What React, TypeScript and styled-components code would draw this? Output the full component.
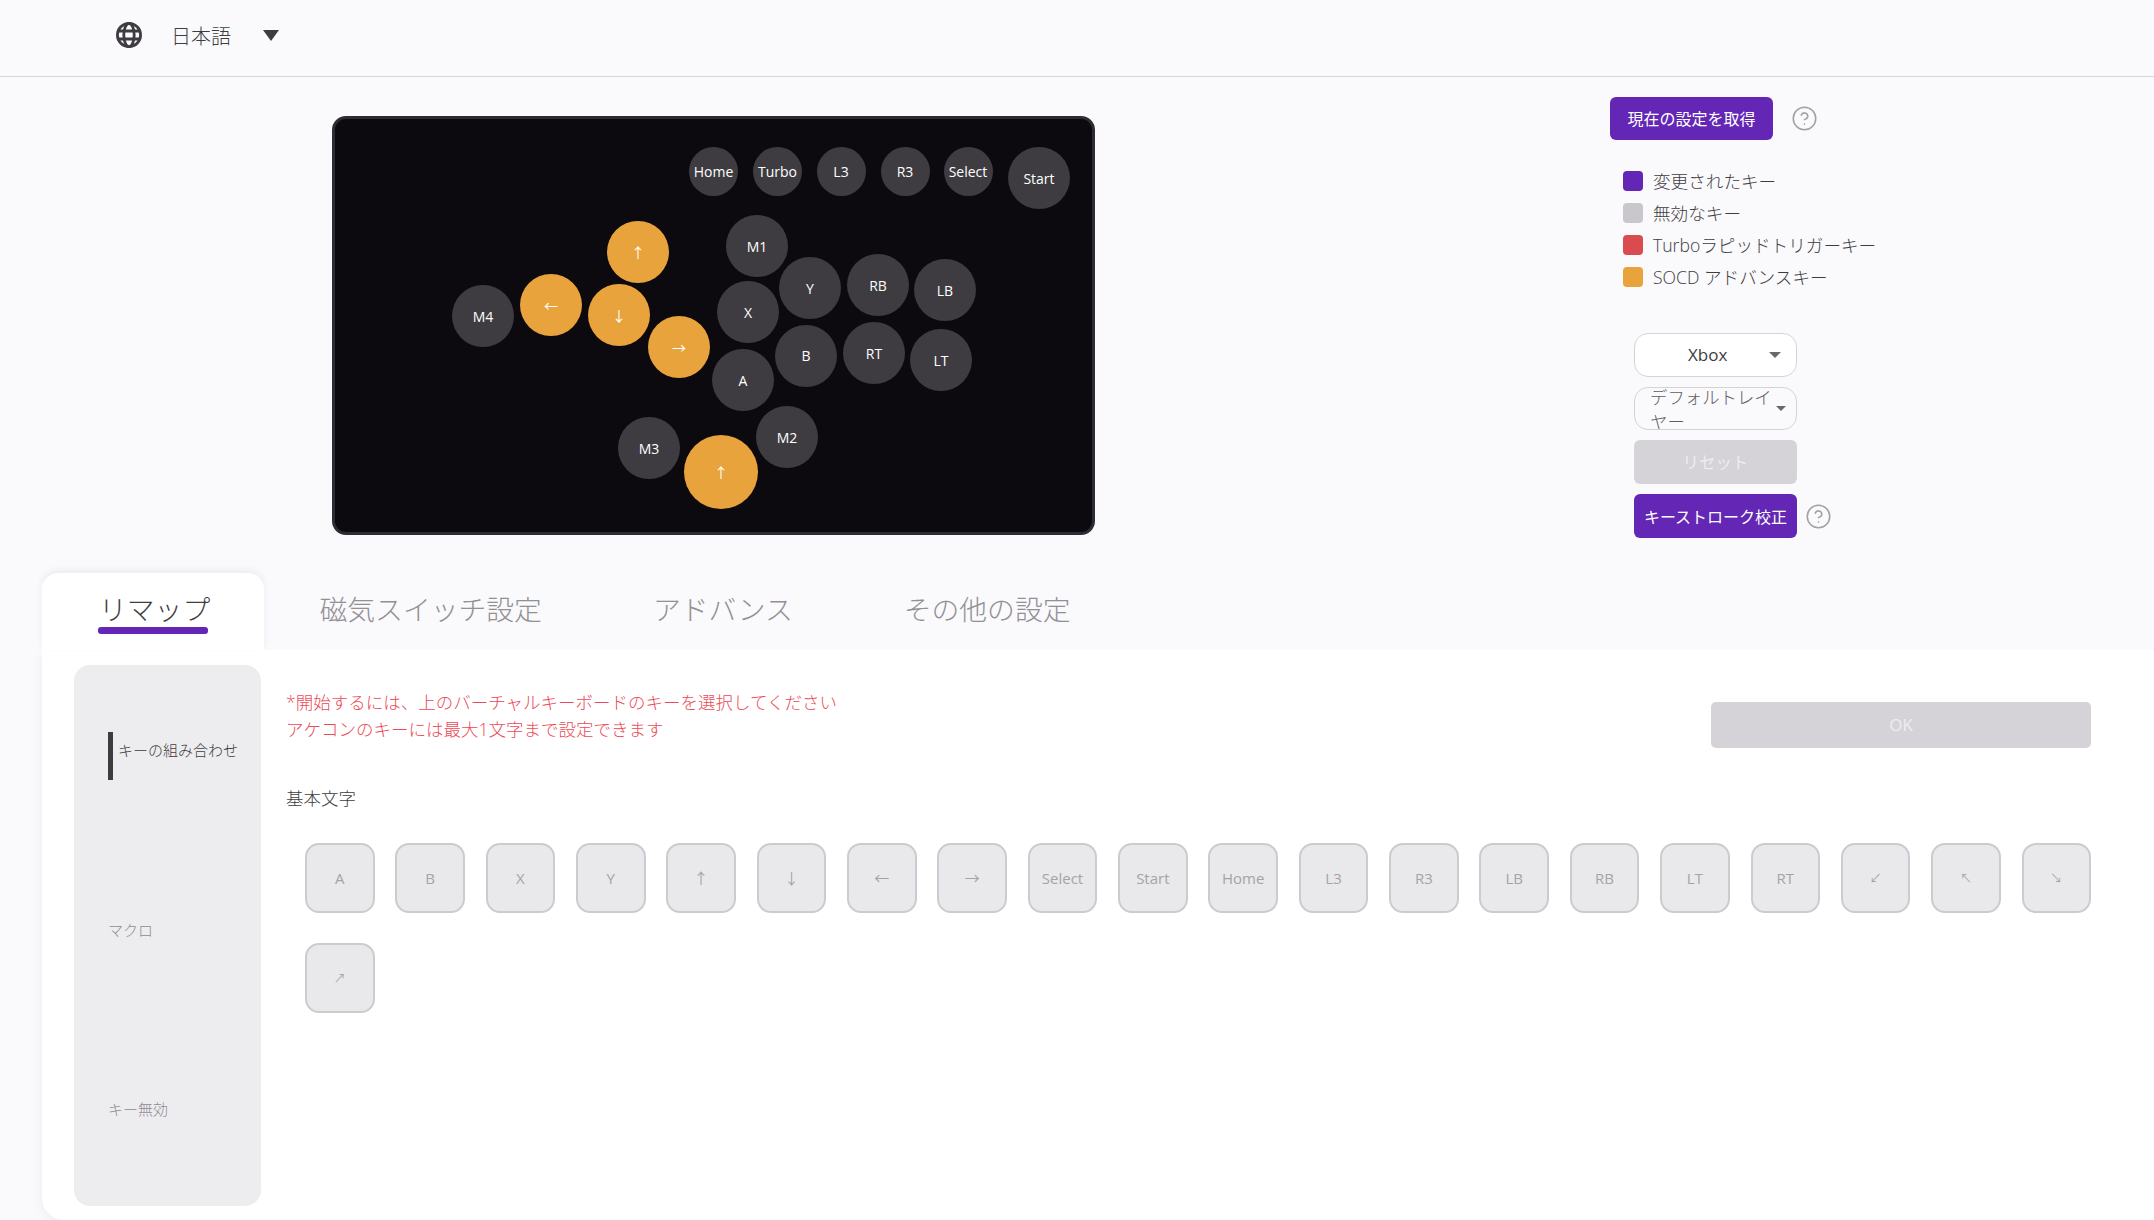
import React from "react";
import styled, { createGlobalStyle } from "styled-components";
import { CircleHelp } from "lucide-react";

const bodyFont = `"Open Sans", "Noto Sans CJK JP", sans-serif`;

const GlobalStyle = createGlobalStyle`
  html, body {
    margin: 0;
    padding: 0;
    height: 100%;
    background: #faf9fc;
    font-family: ${bodyFont};
    color: #3e3c41;
    overflow: hidden;
  }
  * { box-sizing: border-box; }
`;

const orange = "#e9a33c";
const purple = "#6326b5";

type PadKey = { label: string; x: number; y: number; d: number; socd?: boolean };

const padKeys: PadKey[] = [
  { label: "Home", x: 713.5, y: 171, d: 49 },
  { label: "Turbo", x: 777.5, y: 171, d: 49 },
  { label: "L3", x: 841, y: 171, d: 49 },
  { label: "R3", x: 905, y: 171, d: 49 },
  { label: "Select", x: 968, y: 171, d: 49 },
  { label: "Start", x: 1039, y: 178, d: 62 },
  { label: "↑", x: 638, y: 252, d: 62, socd: true },
  { label: "M1", x: 757, y: 246, d: 62 },
  { label: "Y", x: 810, y: 288, d: 62 },
  { label: "RB", x: 878, y: 285, d: 62 },
  { label: "LB", x: 945, y: 290, d: 62 },
  { label: "X", x: 748, y: 312, d: 62 },
  { label: "←", x: 551, y: 305, d: 62, socd: true },
  { label: "↓", x: 619, y: 315, d: 62, socd: true },
  { label: "M4", x: 483, y: 316, d: 62 },
  { label: "→", x: 679, y: 347, d: 62, socd: true },
  { label: "A", x: 743, y: 380, d: 62 },
  { label: "B", x: 806, y: 355.5, d: 62 },
  { label: "RT", x: 874, y: 353, d: 62 },
  { label: "LT", x: 941, y: 360, d: 62 },
  { label: "M2", x: 787, y: 437, d: 62 },
  { label: "M3", x: 649, y: 448, d: 62 },
  { label: "↑", x: 721, y: 472, d: 74, socd: true },
];

const legend = [
  { color: purple, text: "変更されたキー" },
  { color: "#c9c7cb", text: "無効なキー" },
  { color: "#d94b4e", text: "Turboラピッドトリガーキー" },
  { color: orange, text: "SOCD アドバンスキー" },
];

const keyLabels = [
  "A", "B", "X", "Y", "↑", "↓", "←", "→", "Select", "Start", "Home",
  "L3", "R3", "LB", "RB", "LT", "RT", "↙", "↖", "↘", "↗",
];

const diagonals = ["↙", "↖", "↘", "↗"];

function Globe() {
  return (
    <svg width="26" height="26" viewBox="0 0 26 26" fill="none" stroke="#3e3c41" strokeWidth="2.8">
      <circle cx="13" cy="13" r="11.6" />
      <ellipse cx="13" cy="13" rx="5.2" ry="11.6" />
      <path d="M2.6 9h20.8M2.6 17h20.8" />
    </svg>
  );
}

export default function App() {
  return (
    <Page>
      <GlobalStyle />
      <Header>
        <Globe />
        <Language>日本語</Language>
        <LanguageCaret />
      </Header>

      <TopArea>
        <PadPanel>
          {padKeys.map((k, i) => (
            <PadButton key={i} $x={k.x} $y={k.y} $d={k.d} $socd={k.socd}>
              {k.label}
            </PadButton>
          ))}
        </PadPanel>

        <SideColumn>
          <FetchRow>
            <FetchButton>現在の設定を取得</FetchButton>
            <CircleHelp size={27} color="#a3a1a6" strokeWidth={1.4} />
          </FetchRow>

          <Legend>
            {legend.map((l) => (
              <LegendRow key={l.text}>
                <Swatch $color={l.color} />
                <LegendText>{l.text}</LegendText>
              </LegendRow>
            ))}
          </Legend>

          <Controls>
            <XboxSelect>
              <XboxLabel>Xbox</XboxLabel>
              <SmallCaret />
            </XboxSelect>
            <LayerSelect>
              <LayerLabel>デフォルトレイヤー</LayerLabel>
              <TinyCaret />
            </LayerSelect>
            <ResetButton>リセット</ResetButton>
            <CalibrateRow>
              <CalibrateButton>キーストローク校正</CalibrateButton>
              <CircleHelp size={27} color="#a3a1a6" strokeWidth={1.4} />
            </CalibrateRow>
          </Controls>
        </SideColumn>
      </TopArea>

      <Tabs>
        <ActiveTab>
          リマップ
          <TabUnderline />
        </ActiveTab>
        <Tab>磁気スイッチ設定</Tab>
        <Tab>アドバンス</Tab>
        <Tab>その他の設定</Tab>
      </Tabs>

      <Card>
        <SideNav>
          <NavItem $active>キーの組み合わせ</NavItem>
          <NavItem>マクロ</NavItem>
          <NavItem>キー無効</NavItem>
        </SideNav>

        <Content>
          <NoticeRow>
            <Notice>
              *開始するには、上のバーチャルキーボードのキーを選択してください
              <br />
              アケコンのキーには最大1文字まで設定できます
            </Notice>
            <OkButton>OK</OkButton>
          </NoticeRow>
          <SectionTitle>基本文字</SectionTitle>
          <KeyGrid>
            {keyLabels.map((k) => (
              <KeyCap key={k} $small={diagonals.includes(k)}>
                {k}
              </KeyCap>
            ))}
          </KeyGrid>
        </Content>
      </Card>
    </Page>
  );
}

const Page = styled.div`
  width: 2154px;
  height: 1220px;
  overflow: hidden;
`;

const Header = styled.header`
  height: 77px;
  padding: 0 0 6px 116px;
  display: flex;
  align-items: center;
  border-bottom: 1.5px solid #d8d6da;
`;

const Language = styled.span`
  margin-left: 29px;
  font-size: 20px;
  font-weight: 300;
`;

const LanguageCaret = styled.span`
  margin-left: 32px;
  width: 0;
  height: 0;
  border-left: 8px solid transparent;
  border-right: 8px solid transparent;
  border-top: 11px solid #3e3c41;
`;

const TopArea = styled.section`
  height: 496px;
  padding-left: 332px;
  display: flex;
`;

const PadPanel = styled.div`
  margin-top: 39px;
  width: 763px;
  height: 419px;
  background: #0c0a0e;
  border: 3px solid #2e2c32;
  border-radius: 14px;
  position: relative;
`;

/* the pad is a free canvas: coordinates are the button centres on the page */
const PadButton = styled.div<{ $x: number; $y: number; $d: number; $socd?: boolean }>`
  position: absolute;
  left: ${(p) => p.$x - 335 - p.$d / 2}px;
  top: ${(p) => p.$y - 119 - p.$d / 2}px;
  width: ${(p) => p.$d}px;
  height: ${(p) => p.$d}px;
  border-radius: 50%;
  background: ${(p) => (p.$socd ? orange : "#3e3c41")};
  color: #fff;
  font-size: 14px;
  display: flex;
  align-items: center;
  justify-content: center;
`;

const SideColumn = styled.aside`
  margin-left: 515px;
  padding-top: 20px;
  display: flex;
  flex-direction: column;
`;

const FetchRow = styled.div`
  display: flex;
  align-items: center;
  gap: 18px;
`;

const PurpleButton = styled.button`
  border: none;
  border-radius: 6px;
  background: ${purple};
  color: #fff;
  font-family: ${bodyFont};
  padding: 0;
`;

const FetchButton = styled(PurpleButton)`
  width: 163px;
  height: 43px;
  font-size: 16px;
  line-height: 40px;
`;

const Legend = styled.div`
  margin-top: 31px;
  padding-left: 13px;
  display: flex;
  flex-direction: column;
  gap: 12px;
`;

const LegendRow = styled.div`
  height: 20px;
  display: flex;
  align-items: center;
  gap: 10px;
`;

const LegendText = styled.span`
  font-size: 17.6px;
  font-weight: 300;
  position: relative;
  top: -1px;
`;

const Swatch = styled.span<{ $color: string }>`
  width: 20px;
  height: 20px;
  border-radius: 4px;
  background: ${(p) => p.$color};
`;

const Controls = styled.div`
  margin-top: 46px;
  padding-left: 24px;
  display: flex;
  flex-direction: column;
  gap: 10px;
`;

const SelectBox = styled.div`
  width: 163px;
  border: 1.5px solid #d5d3d8;
  border-radius: 14px;
  display: flex;
  align-items: center;
  position: relative;
  overflow: hidden;
`;

const XboxSelect = styled(SelectBox)`
  height: 44px;
  background: #fff;
  padding-bottom: 1px;
`;

const XboxLabel = styled.span`
  margin-left: 53px;
  font-size: 17px;
`;

const SmallCaret = styled.span`
  position: absolute;
  right: 15px;
  top: 18px;
  width: 0;
  height: 0;
  border-left: 6px solid transparent;
  border-right: 6px solid transparent;
  border-top: 6px solid #6a686d;
`;

const LayerSelect = styled(SelectBox)`
  height: 43px;
  padding-left: 15px;
`;

const LayerLabel = styled.span`
  width: 124px;
  flex-shrink: 0;
  font-size: 17.4px;
  line-height: 24px;
  font-weight: 300;
  color: #5f5d62;
`;

const TinyCaret = styled.span`
  position: absolute;
  right: 10px;
  top: 18px;
  width: 0;
  height: 0;
  border-left: 5px solid transparent;
  border-right: 5px solid transparent;
  border-top: 5px solid #6a686d;
`;

const ResetButton = styled.button`
  width: 163px;
  height: 44px;
  border: none;
  border-radius: 6px;
  background: #d5d3d7;
  color: #eeedef;
  font-family: ${bodyFont};
  font-size: 16.5px;
  padding: 0;
`;

const CalibrateRow = styled.div`
  display: flex;
  align-items: center;
  gap: 8px;
`;

const CalibrateButton = styled(PurpleButton)`
  width: 163px;
  height: 44px;
  font-size: 16px;
  white-space: nowrap;
`;

const Tabs = styled.nav`
  height: 77px;
  margin-left: 42px;
  display: flex;
`;

const Tab = styled.div`
  position: relative;
  padding: 15px 55.5px 0;
  font-size: 27.8px;
  line-height: 42px;
  font-weight: 300;
  color: #929094;
  white-space: nowrap;
`;

const ActiveTab = styled(Tab)`
  width: 222px;
  padding-left: 57px;
  padding-right: 0;
  background: #fff;
  color: #3e3c41;
  border-radius: 16px 16px 0 0;
  box-shadow: 0 -3px 6px rgba(62, 60, 65, 0.07);
`;

const TabUnderline = styled.span`
  position: absolute;
  left: 56px;
  top: 54px;
  width: 110px;
  height: 7px;
  border-radius: 3px;
  background: ${purple};
`;

const Card = styled.main`
  height: 570px;
  margin-left: 42px;
  padding: 15px 63px 14px 32px;
  background: #fff;
  border-radius: 0 0 0 22px;
  box-shadow: -3px 4px 8px -1px rgba(62, 60, 65, 0.05);
  display: flex;
  gap: 25px;
`;

const SideNav = styled.div`
  width: 187px;
  flex-shrink: 0;
  padding: 67px 0 0 34px;
  border-radius: 16px;
  background: #edecef;
  display: flex;
  flex-direction: column;
  gap: 131.5px;
`;

const NavItem = styled.div<{ $active?: boolean }>`
  height: 48px;
  padding-left: ${(p) => (p.$active ? "5px" : "0")};
  border-left: ${(p) => (p.$active ? "5px solid #3e3c41" : "none")};
  font-size: 15px;
  line-height: 36px;
  font-weight: 300;
  color: ${(p) => (p.$active ? "#3e3c41" : "#8f8d92")};
  white-space: nowrap;
`;

const Content = styled.div`
  flex: 1;
  padding-top: 23.5px;
`;

const NoticeRow = styled.div`
  display: flex;
  justify-content: space-between;
  align-items: flex-start;
`;

const Notice = styled.p`
  margin: 0;
  font-size: 17.5px;
  line-height: 27px;
  font-weight: 300;
  color: #eb4a57;
`;

const OkButton = styled.button`
  width: 380px;
  height: 46px;
  margin-top: 13px;
  border: none;
  border-radius: 5px;
  background: #d5d3d7;
  color: #eeedef;
  font-family: ${bodyFont};
  font-size: 17px;
  padding: 0;
`;

const SectionTitle = styled.h3`
  margin: 37px 0 0;
  font-size: 17.5px;
  line-height: 27px;
  font-weight: 300;
  color: #3e3c41;
`;

const KeyGrid = styled.div`
  margin-top: 31px;
  padding-left: 19px;
  display: grid;
  grid-template-columns: repeat(20, 69.5px);
  column-gap: 20.85px;
  row-gap: 30px;
`;

const KeyCap = styled.div<{ $small?: boolean }>`
  height: 70px;
  border: 2px solid #cdcbd0;
  border-radius: 14px;
  background: #e9e8eb;
  color: #a5a3a8;
  font-size: ${(p) => (p.$small ? "12px" : "15px")};
  display: flex;
  align-items: center;
  justify-content: center;
`;
